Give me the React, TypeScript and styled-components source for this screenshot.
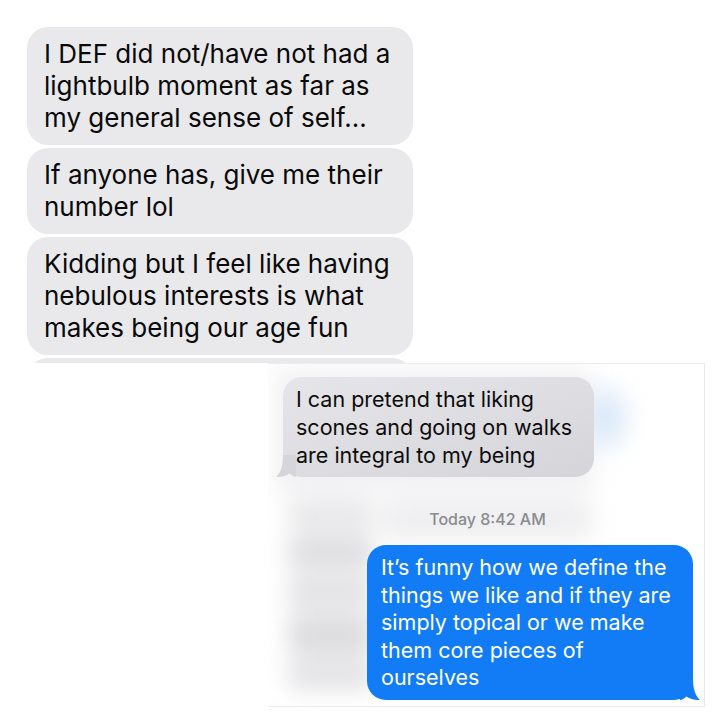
import styled, { createGlobalStyle } from 'styled-components';

const GlobalStyle = createGlobalStyle`
  html, body {
    margin: 0;
    padding: 0;
    background: #ffffff;
  }
  body {
    font-family: Inter, "Noto Sans", "Liberation Sans", sans-serif;
    -webkit-font-smoothing: antialiased;
  }
`;

const Page = styled.div`
  width: 720px;
  height: 727px;
  display: flex;
  flex-direction: column;
  overflow: hidden;
`;

// ---- top screenshot ----

const TopShot = styled.div`
  margin-left: 27px;
  width: 386px;
  height: 363px;
  flex-shrink: 0;
  overflow: hidden;
  display: flex;
  flex-direction: column;
`;

const Divider = styled.div`
  height: 1px;
  margin: 15px 18px 12px 12px;
  background: linear-gradient(90deg, #f2f2f2, #e0e0e0 20%, #e0e0e0 90%, #f0f0f0);
`;

const BigBubble = styled.div`
  flex-shrink: 0;
  margin-bottom: 3px;
  padding: 11px 17px;
  border-radius: 21px;
  background: #e9e9eb;
  color: #0a0a0a;
  font-size: 26px;
  line-height: 32px;
`;

// ---- bottom screenshot ----

const BottomShot = styled.div`
  position: relative;
  margin-left: 268px;
  width: 437px;
  height: 344px;
  flex-shrink: 0;
  overflow: hidden;
  background: #ffffff;
  border-top: 1px solid #ececee;
  border-right: 1px solid #e8e8ec;
  border-bottom: 1px solid #ececee;
  box-sizing: border-box;
`;

// blurred conversation behind the focused bubbles
const Backdrop = styled.div`
  position: absolute;
  inset: 0;
  pointer-events: none;
  filter: blur(11px);
  display: grid;
  grid-template-columns: 105px 1fr;
  grid-template-rows: 126px 40px 1fr;
  padding: 4px 110px 14px 0;
  gap: 6px 0;
`;

const Haze = styled.div<{ $tone: string; $wide?: boolean }>`
  grid-column: ${(p) => (p.$wide ? '1 / span 2' : 'auto')};
  background: ${(p) => p.$tone};
  border-radius: 14px;
  margin-left: 6px;
`;

const Streaks = styled.div`
  grid-column: 1;
  grid-row: 2 / span 2;
  display: flex;
  flex-direction: column;
  gap: 5px;
  padding: 0 0 0 20px;
`;

const Streak = styled.div<{ $h: number; $tone: string }>`
  height: ${(p) => p.$h}px;
  background: ${(p) => p.$tone};
  border-radius: 8px;
`;

const Glow = styled.div`
  position: absolute;
  left: 318px;
  top: 24px;
  width: 40px;
  height: 60px;
  border-radius: 50%;
  background: #cfe2f6;
  filter: blur(12px);
  opacity: 0.75;
  pointer-events: none;
`;

const Thread = styled.div`
  position: relative;
  display: flex;
  flex-direction: column;
  padding: 13px 11px 0 15px;
`;

const Bubble = styled.div<{ $sent?: boolean }>`
  position: relative;
  box-sizing: border-box;
  align-self: ${(p) => (p.$sent ? 'flex-end' : 'flex-start')};
  padding: ${(p) => (p.$sent ? '9px 14px 8px 14px' : '8px 14px 8px 13px')};
  border-radius: 19px;
  background: ${(p) =>
    p.$sent ? '#117cf5' : 'linear-gradient(165deg, #e6e6ea 0%, #dddde1 55%, #d4d4d9 100%)'};
  color: ${(p) => (p.$sent ? '#ffffff' : '#0c0c0c')};
  font-size: 21.5px;
  line-height: ${(p) => (p.$sent ? '27.6px' : '28px')};
  width: ${(p) => (p.$sent ? '326px' : '311px')};
`;

const Tail = styled.svg<{ $sent?: boolean }>`
  position: absolute;
  bottom: 0;
  width: 20px;
  height: 22px;
  ${(p) => (p.$sent ? 'right: -7px;' : 'left: -7px; transform: scaleX(-1);')}
`;

const Stamp = styled.div`
  align-self: center;
  margin: 32px 0 16px 0;
  padding-right: 1px;
  color: #8a8a8f;
  font-size: 16px;
  line-height: 20px;
  font-weight: 500;
`;

const BubbleTail = ({ sent, color }: { sent?: boolean; color: string }) => (
  <Tail $sent={sent} viewBox="0 0 20 22">
    <path d="M0 0 H13 C13 9 14.5 17 20 22 C14 22.3 9.5 20.8 6.5 18.5 C4.5 20.5 2 21.8 0 22 Z" fill={color} />
  </Tail>
);

export default function App() {
  return (
    <Page>
      <GlobalStyle />
      <TopShot>
        <Divider />
        <BigBubble>
          I DEF did not/have not had a<br />
          lightbulb moment as far as<br />
          my general sense of self...
        </BigBubble>
        <BigBubble>
          If anyone has, give me their<br />
          number lol
        </BigBubble>
        <BigBubble>
          Kidding but I feel like having<br />
          nebulous interests is what<br />
          makes being our age fun
        </BigBubble>
        <BigBubble>&nbsp;</BigBubble>
      </TopShot>

      <BottomShot>
        <Backdrop>
          <Haze $wide $tone="#f2f2f4" />
          <Streaks>
            <Streak $h={30} $tone="#e8e8ea" />
            <Streak $h={34} $tone="#dfdfe2" />
            <Streak $h={36} $tone="#e4e4e7" />
            <Streak $h={40} $tone="#dddde0" />
            <Streak $h={30} $tone="#e3e3e6" />
          </Streaks>
          <Haze $tone="#efeff1" />
        </Backdrop>
        <Glow />
        <Thread>
          <Bubble>
            I can pretend that liking<br />
            scones and going on walks<br />
            are integral to my being
            <BubbleTail color="#d5d5da" />
          </Bubble>
          <Stamp>Today 8:42 AM</Stamp>
          <Bubble $sent>
            It’s funny how we define the<br />
            things we like and if they are<br />
            simply topical or we make<br />
            them core pieces of<br />
            ourselves
            <BubbleTail sent color="#117cf5" />
          </Bubble>
        </Thread>
      </BottomShot>
    </Page>
  );
}
